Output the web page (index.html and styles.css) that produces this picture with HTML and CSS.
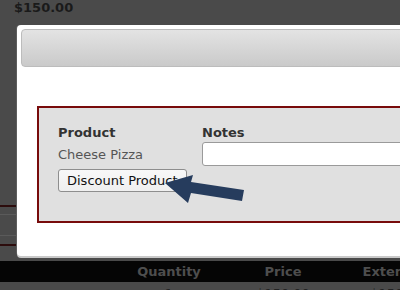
FILE: index.html
```html
<!DOCTYPE html>
<html>
<head>
<meta charset="utf-8">
<link rel="stylesheet" href="styles.css">
</head>
<body>
<div class="page">
  <div class="total">$150.00</div>
  <div class="rules">
    <div class="rule red"></div>
    <div class="gap g1"></div>
    <div class="rule gray"></div>
    <div class="gap g2"></div>
    <div class="rule gray"></div>
    <div class="gap g3"></div>
    <div class="rule red"></div>
  </div>
  <div class="thead">
    <span></span><span>Quantity</span><span>Price</span><span>Extended</span>
  </div>
  <div class="trow">
    <span></span><span>1</span><span>$150.00</span><span>$150.00</span>
  </div>
</div>

<div class="dialog">
  <div class="titlebar"></div>
  <div class="dialog-body">
    <div class="fieldset">
      <div class="form-grid">
        <div class="label">Product</div>
        <div class="label">Notes</div>
        <div class="value">Cheese Pizza</div>
        <div class="notes-input"></div>
        <div><button class="btn">Discount Product</button></div>
        <div></div>
      </div>
    </div>
  </div>
</div>

<svg class="arrow" width="400" height="290" viewBox="0 0 400 290">
  <polygon points="165,183 193,175 191,182 244,190 242,201 191,193 188,203" fill="#263c5d"/>
</svg>
</body>
</html>
```
FILE: styles.css
```css
html, body {
  margin: 0;
  padding: 0;
}
body {
  width: 400px;
  height: 290px;
  overflow: hidden;
  background: #4a4a4a;
  font-family: "DejaVu Sans", Verdana, sans-serif;
  font-size: 13px;
  position: relative;
}
.page {
  display: flex;
  flex-direction: column;
}
.total {
  padding-left: 14px;
  font-weight: bold;
  line-height: 15px;
  color: #1a1a1a;
}
.rules {
  margin-top: 190px;
  display: flex;
  flex-direction: column;
}
.rule.red { height: 2px; background: #2c0c0c; }
.rule.gray { height: 1px; background: #5a5a5a; }
.gap.g1 { height: 7px; }
.gap.g2 { height: 20px; }
.gap.g3 { height: 8px; }
.thead, .trow {
  display: grid;
  grid-template-columns: 112px 114px 114px 114px;
  text-align: center;
  white-space: nowrap;
}
.thead {
  margin-top: 15px;
  height: 21px;
  line-height: 21px;
  background: #050505;
  color: #4e4e4e;
  font-weight: bold;
}
.trow {
  padding-top: 4px;
  line-height: 15px;
  color: #222;
}
.dialog {
  position: absolute;
  left: 17px;
  top: 25px;
  width: 420px;
  height: 231px;
  box-sizing: border-box;
  padding: 4px;
  background: #fff;
  border-radius: 4px;
  box-shadow: 0 2px 0 #c9c9c9, -1px 0 0 #5e5e5e;
}
.titlebar {
  height: 38px;
  box-sizing: border-box;
  border: 1px solid #bcbcbc;
  border-radius: 4px;
  background: linear-gradient(#e3e3e3, #cacaca);
}
.dialog-body {
  padding: 39px 0 0 16px;
}
.fieldset {
  border: 2px solid #780b0b;
  background: #e0e0e0;
  padding: 16px 0 29px 19px;
}
.form-grid {
  display: grid;
  grid-template-columns: 144px 1fr;
  align-items: center;
}
.label {
  font-weight: bold;
  color: #333;
  line-height: 18px;
}
.value {
  color: #555;
  line-height: 15px;
}
.notes-input {
  height: 24px;
  box-sizing: border-box;
  border: 1px solid #9a9a9a;
  border-radius: 3px;
  background: #fff;
}
.btn {
  margin-top: 3px;
  height: 23px;
  padding: 0 8px;
  font-family: "DejaVu Sans", Verdana, sans-serif;
  font-size: 13px;
  color: #111;
  background: linear-gradient(#f8f8f8, #efefef);
  border: 1px solid #8e8e8e;
  border-radius: 3px;
  white-space: nowrap;
}
.arrow {
  position: absolute;
  left: 0;
  top: 0;
  pointer-events: none;
}
```
